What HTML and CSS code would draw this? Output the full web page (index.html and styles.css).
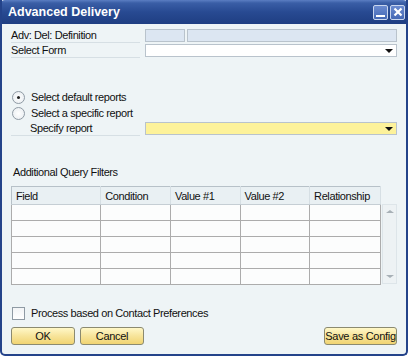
FILE: index.html
```html
<!DOCTYPE html>
<html lang="en">
<head>
    <meta charset="UTF-8">
    <title>Advanced Delivery</title>
    <link rel="stylesheet" href="styles.css">
</head>
<body>
    <div class="window">
        <header class="titlebar">
            <span class="title">Advanced Delivery</span>
            <div class="title-btns">
                <span class="tbtn"><span class="min-bar"></span></span>
                <span class="tbtn">
                    <svg width="10" height="10" viewBox="0 0 10 10"><path d="M1.5 1.5 L8.5 8.5 M8.5 1.5 L1.5 8.5" stroke="#fff" stroke-width="2.2"/></svg>
                </span>
            </div>
        </header>

        <div class="content">
            <div class="row">
                <label class="lbl">Adv: Del: Definition</label>
                <div class="fields">
                    <span class="box grey short"></span>
                    <span class="box grey grow"></span>
                </div>
            </div>
            <div class="row">
                <label class="lbl">Select Form</label>
                <div class="fields">
                    <span class="box grow combo"><span class="arrow"></span></span>
                </div>
            </div>

            <div class="radios">
                <div class="radio-row"><span class="radio checked"></span>Select default reports</div>
                <div class="radio-row"><span class="radio"></span>Select a specific report</div>
            </div>
            <div class="row">
                <label class="lbl indent">Specify report</label>
                <div class="fields">
                    <span class="box grow combo yellow"><span class="arrow"></span></span>
                </div>
            </div>

            <div class="section-title">Additional Query Filters</div>
            <div class="grid-wrap">
                <table class="grid">
                    <tr>
                        <th class="c1">Field</th>
                        <th class="c2">Condition</th>
                        <th class="c3">Value #1</th>
                        <th class="c4">Value #2</th>
                        <th class="c5">Relationship</th>
                    </tr>
                    <tr><td></td><td></td><td></td><td></td><td></td></tr>
                    <tr><td></td><td></td><td></td><td></td><td></td></tr>
                    <tr><td></td><td></td><td></td><td></td><td></td></tr>
                    <tr><td></td><td></td><td></td><td></td><td></td></tr>
                    <tr><td></td><td></td><td></td><td></td><td></td></tr>
                </table>
                <div class="scrollbar">
                    <span class="sc-arrow up"></span>
                    <span class="sc-arrow down"></span>
                </div>
            </div>

            <div class="check-row"><span class="checkbox"></span>Process based on Contact Preferences</div>

            <div class="buttons">
                <button class="btn">OK</button>
                <button class="btn">Cancel</button>
                <button class="btn wide right">Save as Config</button>
            </div>
        </div>
    </div>
</body>
</html>
```

FILE: styles.css
```css
* {
    box-sizing: border-box;
}

body {
    margin: 0;
    font-family: 'Liberation Sans', Arial, sans-serif;
    font-size: 11px;
    letter-spacing: -0.4px;
    color: #111;
    background: #fff;
}

.window {
    width: 408px;
    height: 356px;
    background: #eef4f6;
    border: 2px solid #24438a;
    border-top: none;
    border-radius: 0 0 5px 5px;
    overflow: hidden;
}

.titlebar {
    height: 24px;
    margin: 0 -2px;
    background: linear-gradient(#5b7ec2 0px, #3a5ea6 3px, #284a92 12px, #1f3e82 24px);
    border-radius: 5px 5px 0 0;
    display: flex;
    align-items: center;
    justify-content: space-between;
    padding: 0 3px 0 8px;
}

.title {
    color: #fff;
    font-weight: bold;
    font-size: 12.5px;
    letter-spacing: 0;
}

.title-btns {
    display: flex;
    gap: 2px;
}

.tbtn {
    width: 15px;
    height: 15px;
    border: 1px solid #c9d6ee;
    border-radius: 2px;
    background: linear-gradient(#6b8bd0, #4468b5);
    display: flex;
    align-items: center;
    justify-content: center;
    position: relative;
}

.min-bar {
    position: absolute;
    left: 2px;
    bottom: 2px;
    width: 9px;
    height: 2px;
    background: #fff;
}

.content {
    padding: 4px 9px 0 8px;
}

.row {
    display: flex;
    height: 15px;
    align-items: center;
}

.lbl {
    width: 129px;
    height: 14px;
    margin-left: 1px;
    margin-right: 5px;
    border-bottom: 1px solid #d6dfe4;
    line-height: 13px;
}

.lbl.indent {
    padding-left: 19px;
    width: 129px;
}

.fields {
    flex: 1;
    display: flex;
    gap: 2px;
}

.box {
    height: 13px;
    border: 1px solid #b9c3cc;
    background: #fff;
    position: relative;
}

.box.grey {
    background: #dce6f2;
}

.short {
    width: 40px;
}

.grow {
    flex: 1;
}

.yellow {
    background: #fdf29a;
}

.arrow {
    position: absolute;
    right: 3px;
    top: 4px;
    border-left: 4px solid transparent;
    border-right: 4px solid transparent;
    border-top: 4px solid #111;
}

.radios {
    margin-top: 31px;
}

.radio-row {
    display: flex;
    align-items: center;
    height: 16px;
    margin-left: 2px;
}

.radio {
    width: 13px;
    height: 13px;
    border: 1px solid #8f9aa4;
    border-radius: 50%;
    background: radial-gradient(#ffffff, #e6ebef);
    margin-right: 6px;
    position: relative;
}

.radio.checked::after {
    content: "";
    position: absolute;
    left: 4px;
    top: 4px;
    width: 3px;
    height: 3px;
    border-radius: 50%;
    background: #222;
}

.section-title {
    margin-top: 30px;
    margin-left: 3px;
    height: 15px;
}

.grid-wrap {
    display: flex;
    align-items: flex-start;
    margin-top: 5px;
    margin-left: 1px;
}

.grid {
    border-collapse: collapse;
    background: #fcfdfd;
    border: 1px solid #b7c1c8;
}

.grid th {
    height: 18px;
    background: #e9f0f3;
    font-weight: normal;
    text-align: left;
    padding: 0 4px;
    border-right: 1px solid #d6dfe4;
    border-bottom: 1px solid #c5ced4;
}

.grid td {
    height: 16px;
    border: 1px solid #acacac;
    border-top: none;
    padding: 0;
}

.c1 { width: 90px; }
.c2 { width: 70px; }
.c3 { width: 70px; }
.c4 { width: 70px; }
.c5 { width: 71px; }

.scrollbar {
    width: 15px;
    height: 80px;
    margin-top: 18px;
    margin-left: 1px;
    background: #edf2f4;
    border: 1px solid #dde5e9;
    position: relative;
}

.sc-arrow {
    position: absolute;
    left: 3px;
    border-left: 4px solid transparent;
    border-right: 4px solid transparent;
}

.sc-arrow.up {
    top: 5px;
    border-bottom: 3px solid #a7b0b6;
}

.sc-arrow.down {
    bottom: 5px;
    border-top: 3px solid #a7b0b6;
}

.check-row {
    display: flex;
    align-items: center;
    margin-top: 20px;
    margin-left: 2px;
    height: 16px;
}

.checkbox {
    width: 13px;
    height: 13px;
    border: 1px solid #8f9aa4;
    background: linear-gradient(#f2f4f6, #ffffff);
    margin-right: 6px;
}

.buttons {
    display: flex;
    gap: 5px;
    margin-top: 6px;
    margin-left: 1px;
}

.btn {
    width: 64px;
    height: 18px;
    font-family: inherit;
    font-size: 11px;
    letter-spacing: -0.3px;
    white-space: nowrap;
    color: #111;
    border: 1px solid #8b8a70;
    border-radius: 3px;
    background: linear-gradient(#fff8c8, #f7e49a 50%, #f1d472);
    padding: 0;
    cursor: pointer;
}

.btn.wide {
    width: 73px;
}

.right {
    margin-left: auto;
}
```
